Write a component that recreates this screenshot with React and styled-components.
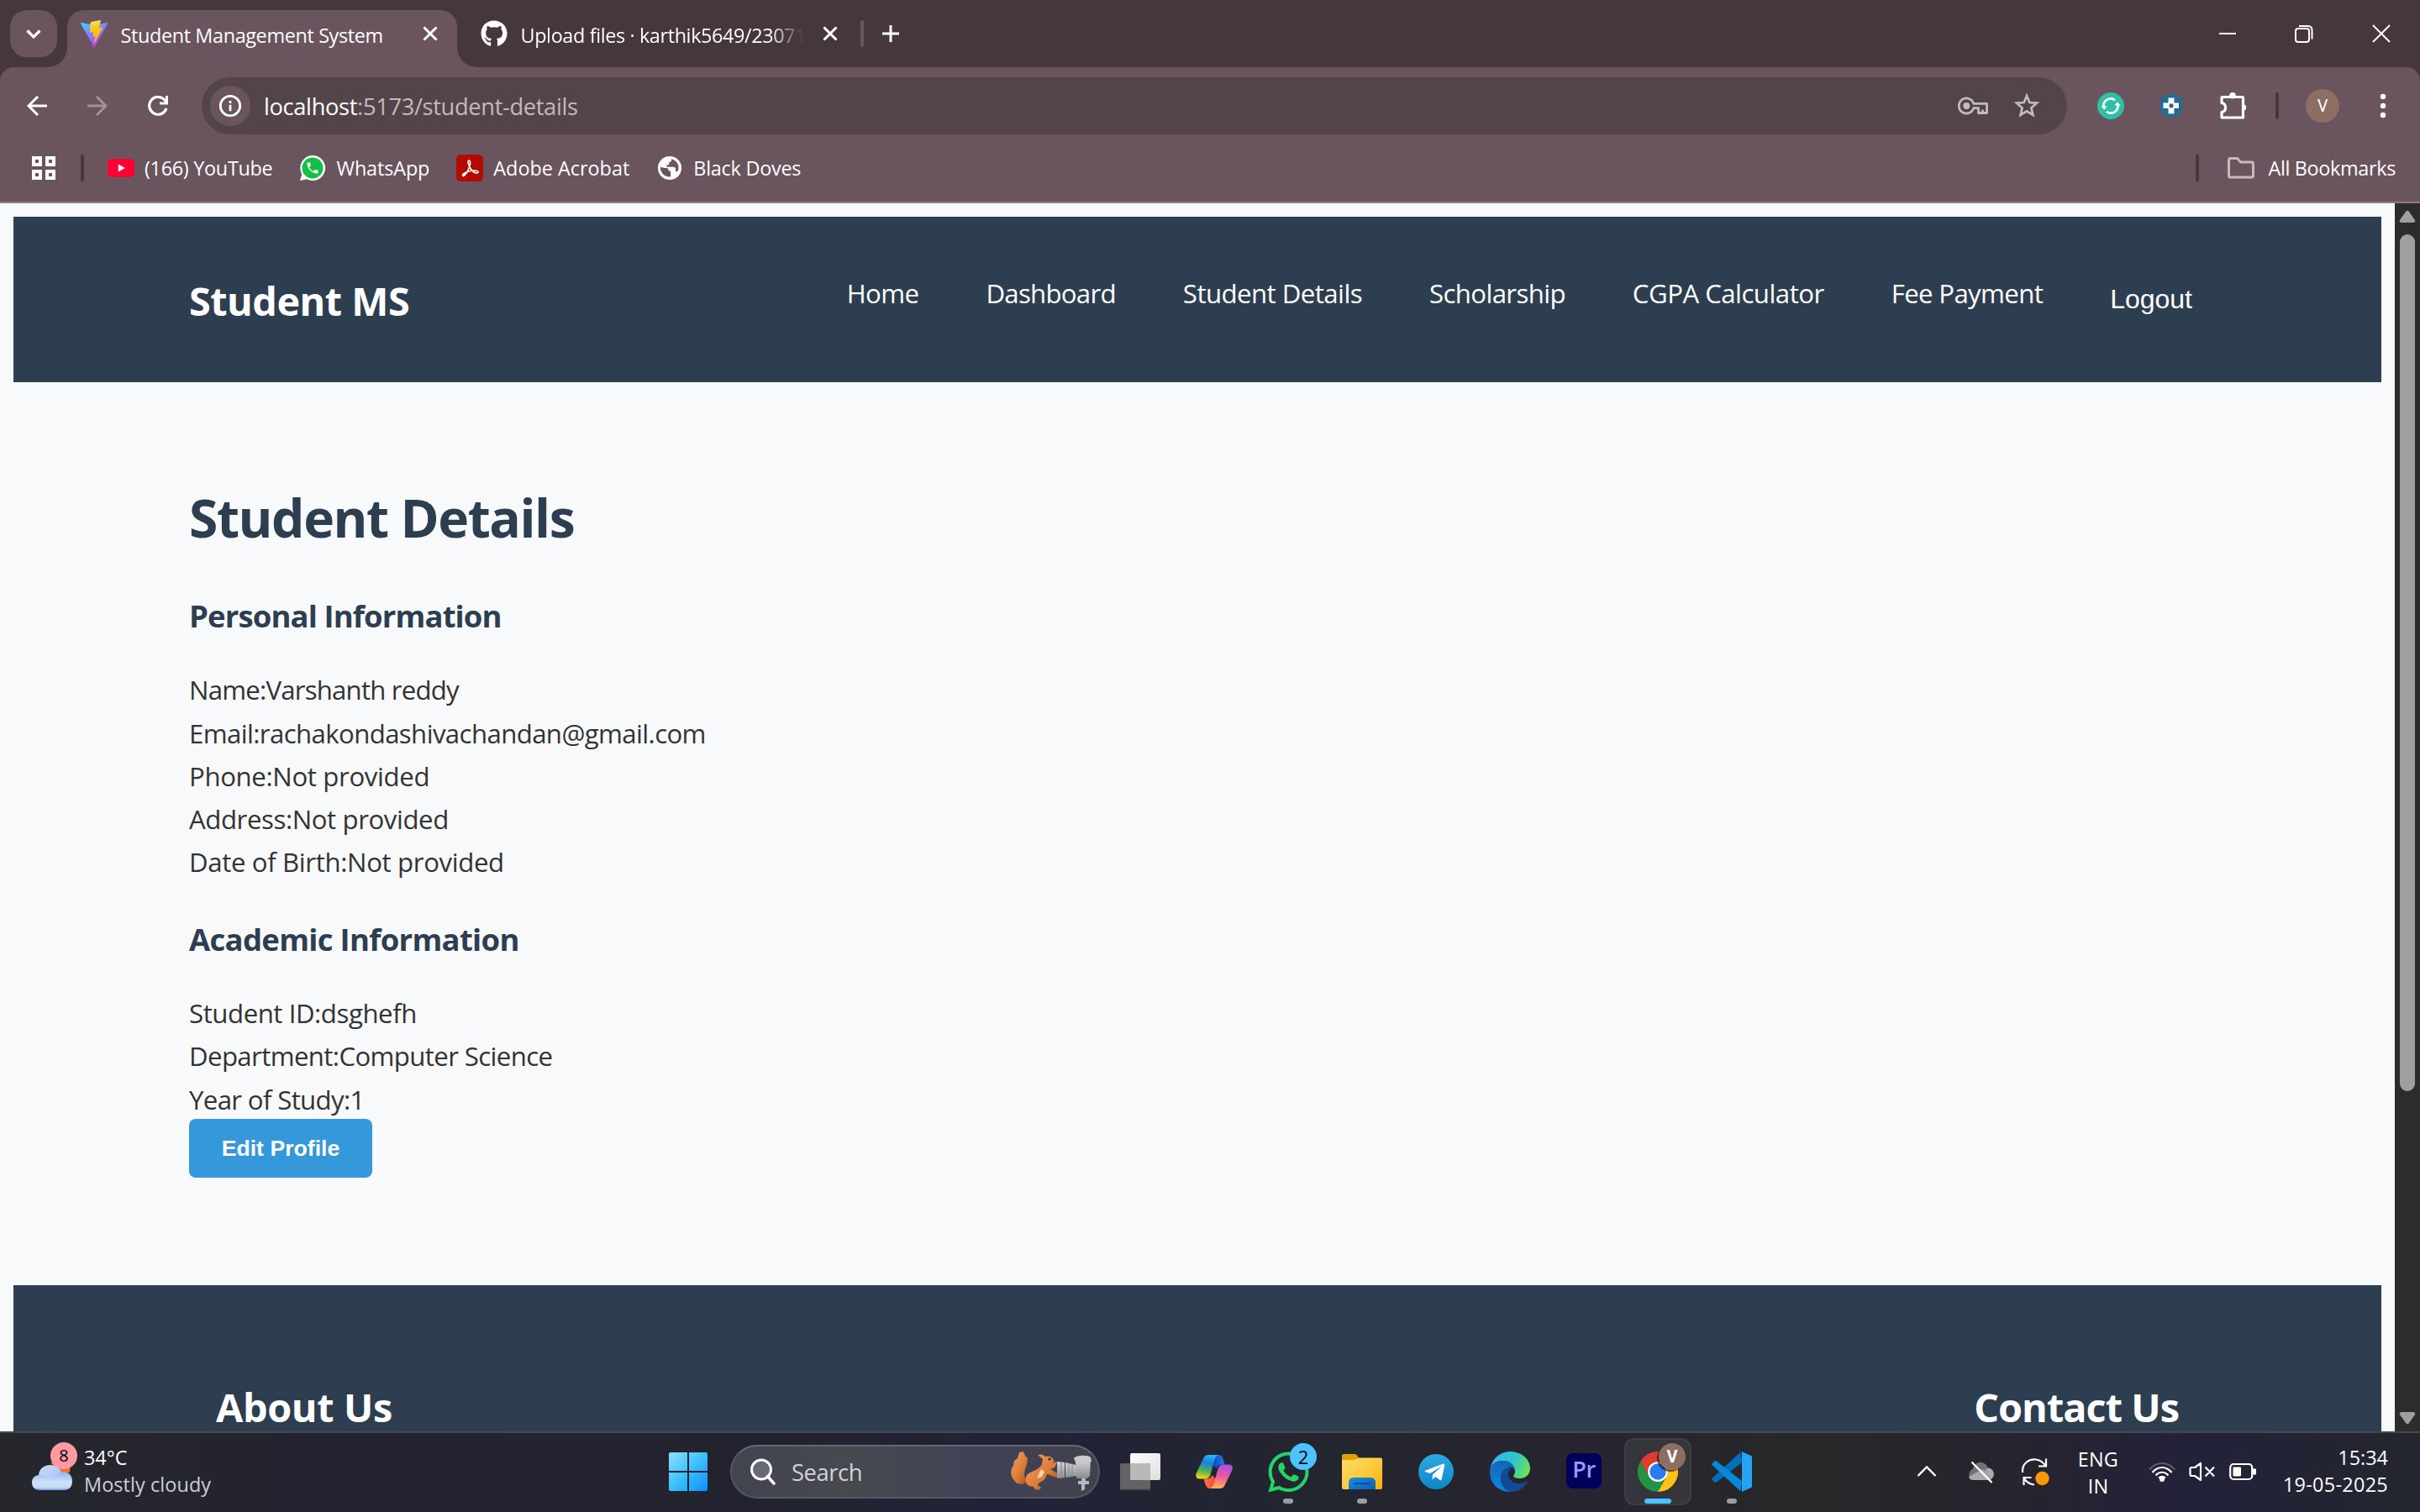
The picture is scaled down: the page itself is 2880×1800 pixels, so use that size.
import React from "react";
import styled, { createGlobalStyle, css } from "styled-components";
import { FaGithub, FaWhatsapp, FaTelegramPlane } from "react-icons/fa";

const ui = `"Open Sans", "Noto Sans", sans-serif`;
const color = {
  strip: "#46363d",
  toolbar: "#6a545d",
  field: "#53444a",
  navy: "#2d3e50",
  page: "#f8f9fb",
  accent: "#3498db",
};

const GlobalStyle = createGlobalStyle`
  * { box-sizing: border-box; }
  html, body { margin: 0; padding: 0; overflow: hidden; }
  body { font-family: ${ui}; }
  svg { display: block; flex: none; }
  h1, h2, h3, p { margin: 0; }
`;

const Screen = styled.div`
  display: flex;
  flex-direction: column;
  width: 2880px;
  height: 1800px;
  overflow: hidden;
`;

const Label = styled.span`
  white-space: nowrap;
  letter-spacing: ${(p) => p.$ls || 0}px;
`;

/* ---------- browser chrome ---------- */

const TabStrip = styled.div`
  display: flex;
  align-items: flex-start;
  height: 80px;
  padding: 12px 0 0 12px;
  background: ${color.strip};
  color: #fff;
  font-size: 23.4px;
`;

const TabSearch = styled.div`
  display: grid;
  place-items: center;
  width: 56px;
  height: 56px;
  margin-right: 12px;
  border-radius: 20px;
  background: ${color.toolbar};
`;

const Tab = styled.div`
  position: relative;
  display: flex;
  align-items: center;
  width: ${(p) => p.$width}px;
  height: 68px;
  padding: 0 ${(p) => (p.$active ? "20px 12px 16px" : "24px 12px 28px")};
  border-radius: 20px 20px 0 0;
  ${(p) =>
    p.$active &&
    css`
      background: ${color.toolbar};
      &::before,
      &::after {
        content: "";
        position: absolute;
        bottom: 0;
        width: 23px;
        height: 23px;
      }
      &::before {
        right: 100%;
        background: radial-gradient(circle at 0 0, transparent 22.5px, ${color.toolbar} 23px);
      }
      &::after {
        left: 100%;
        background: radial-gradient(circle at 100% 0, transparent 22.5px, ${color.toolbar} 23px);
      }
    `}
`;

const TabTitle = styled(Label)`
  margin: 0 auto 0 15.5px;
  padding-top: 3px;
  ${(p) => p.$fade && "mask-image: linear-gradient(90deg, #000 296px, transparent 336px);"}
`;

const IconBox = styled.div`
  display: grid;
  place-items: center;
  flex: none;
  width: ${(p) => p.$w || 32}px;
  height: ${(p) => p.$h || p.$w || 32}px;
`;

const Divider = styled.div`
  flex: none;
  width: 4px;
  height: 32px;
  border-radius: 2px;
  margin: ${(p) => p.$margin || 0};
  background: ${(p) => (p.$light ? color.toolbar : color.strip)};
`;

const WindowButtons = styled.div`
  display: flex;
  margin: 0 0 0 auto;
  height: 56px;
`;

const ToolbarArea = styled.div`
  background: ${color.strip};
`;

const Toolbar = styled.div`
  display: flex;
  align-items: center;
  height: 92px;
  padding: 0 8px;
  border-radius: 16px 16px 0 0;
  background: ${color.toolbar};
`;

const Omnibox = styled.div`
  display: flex;
  align-items: center;
  flex: 1;
  height: 68px;
  margin: 0 16px;
  padding: 0 32px 0 10px;
  border-radius: 34px;
  background: ${color.field};
`;

const OmniboxActions = styled.div`
  display: flex;
  align-items: center;
  gap: 30px;
`;

const SiteInfo = styled.div`
  display: grid;
  place-items: center;
  width: 48px;
  height: 48px;
  border-radius: 50%;
  background: ${color.toolbar};
`;

const Url = styled(Label)`
  margin: 0 auto 0 16px;
  font-size: 27.3px;
  color: #c3babe;
  b {
    font-weight: 400;
    color: #fff;
  }
`;

const Avatar = styled.div`
  display: grid;
  place-items: center;
  width: ${(p) => p.$size}px;
  height: ${(p) => p.$size}px;
  border-radius: 50%;
  background: #8d6e63;
  color: #fff;
  font: ${(p) => p.$weight || 400} 20px Roboto, sans-serif;
`;

const Bookmarks = styled.div`
  display: flex;
  align-items: center;
  height: 70px;
  padding: 0 29px 12px 36px;
  border-bottom: 2px solid #8d7a82;
  background: ${color.toolbar};
  color: #fff;
  font-size: 23.4px;
`;

const BookmarkList = styled.div`
  display: flex;
  gap: 32px;
`;

const Bookmark = styled.div`
  display: flex;
  align-items: center;
  gap: ${(p) => p.$gap || 12}px;
  ${Label} { padding-bottom: 1px; }
`;

/* ---------- web page ---------- */

const Viewport = styled.div`
  display: flex;
  height: 1462px;
  background: ${color.page};
`;

const Page = styled.div`
  flex: 1;
  display: flex;
  flex-direction: column;
  padding: 16px 16px 0;
  overflow: hidden;
`;

const Header = styled.header`
  display: flex;
  flex: none;
  justify-content: space-between;
  align-items: flex-start;
  height: 197px;
  padding: 62px 225px 0 209px;
  background: ${color.navy};
  color: #fff;
`;

const Brand = styled.h2`
  font-size: 46.8px;
  line-height: 76.8px;
  letter-spacing: -0.5px;
`;

const Nav = styled.nav`
  display: flex;
  gap: 80px;
  padding-top: 4px;
  font-size: 31.2px;
  line-height: 51.2px;
`;

const LogoutButton = styled.button`
  margin-top: 7px;
  padding: 0;
  border: 0;
  background: none;
  color: #fff;
  font: 32px/51.2px "Liberation Sans", Arial, sans-serif;
`;

const Main = styled.main`
  flex: none;
  height: 1075px;
  padding: 109.5px 209px 0;
  color: #333;
`;

const Title = styled.h1`
  margin-bottom: 37px;
  color: ${color.navy};
  font-size: 62.4px;
  line-height: 102.4px;
  letter-spacing: -1.45px;
`;

const Section = styled.section`
  margin-bottom: ${(p) => (p.$last ? -2.5 : 36.5)}px;
`;

const SectionTitle = styled.h3`
  margin-bottom: 32.5px;
  color: ${color.navy};
  font-size: 36.5px;
  line-height: 59.9px;
  letter-spacing: ${(p) => p.$ls}px;
`;

const Field = styled.p`
  font-size: 31.2px;
  line-height: 51.2px;
`;

const EditButton = styled.button`
  display: block;
  width: 218px;
  height: 70px;
  padding: 0;
  border: 0;
  border-radius: 8px;
  background: ${color.accent};
  color: #fff;
  font: 700 26.67px "Liberation Sans", Arial, sans-serif;
`;

const Footer = styled.footer`
  display: flex;
  flex: none;
  justify-content: space-between;
  height: 400px;
  padding: 106.6px 241px 0;
  background: ${color.navy};
  color: #fff;
  h2 {
    font-size: 46.8px;
    line-height: 76.8px;
  }
`;

const Scrollbar = styled.div`
  display: flex;
  flex-direction: column;
  align-items: center;
  width: 30px;
  padding: 8px 0 8px;
  background: #2c2c2c;
`;

const Thumb = styled.div`
  width: 18px;
  height: 1020px;
  margin: 13px 0 auto;
  border-radius: 9px;
  background: #9f9f9f;
`;

/* ---------- taskbar ---------- */

const Taskbar = styled.div`
  display: flex;
  align-items: center;
  height: 96px;
  padding-right: 38px;
  border-top: 2px solid #47484d;
  background: linear-gradient(90deg, #25272d 0, #23242f 12%, #22232f 32%, #202238 42%, #23262f 54%, #272430 65%, #272829 74%, #28242e 82%, #22223a 91%, #23262e 100%);
  color: #fff;
  font-size: 23.4px;
`;

const Weather = styled.div`
  display: flex;
  align-items: center;
  width: 775px;
  padding-left: 38px;
`;

const WeatherIcon = styled.div`
  position: relative;
  width: 48px;
  height: 64px;
  padding-top: 20px;
  margin-right: 14px;
`;

const Badge = styled.div`
  position: absolute;
  top: ${(p) => p.$top}px;
  left: ${(p) => p.$left}px;
  display: grid;
  place-items: center;
  width: 32px;
  height: 32px;
  border-radius: 50%;
  background: ${(p) => p.$bg};
  color: #000;
  font-size: ${(p) => p.$size || 20}px;
  line-height: 32px;
`;

const Stack = styled.div`
  display: flex;
  flex-direction: column;
  align-items: ${(p) => p.$align || "flex-start"};
  width: ${(p) => (p.$width ? p.$width + "px" : "auto")};
  margin: 0 ${(p) => p.$mr || 0}px ${(p) => p.$lift || 0}px ${(p) => p.$ml || 0}px;
  line-height: 32px;
`;

const Muted = styled(Label)`
  color: #cfcfd2;
`;

const AppButton = styled.div`
  position: relative;
  display: grid;
  place-items: center;
  flex: none;
  width: 80px;
  height: 80px;
  margin: 0 4px 2px;
  border-radius: 12px;
  ${(p) =>
    p.$active &&
    css`
      background: rgba(255, 255, 255, 0.07);
      box-shadow: inset 0 0 0 2px rgba(255, 255, 255, 0.05);
    `}
  &::after {
    content: "";
    position: absolute;
    bottom: 2px;
    left: calc(50% - ${(p) => (p.$active ? 16 : 6)}px);
    width: ${(p) => (p.$active ? 32 : 12)}px;
    height: 6px;
    border-radius: 3px;
    background: ${(p) => (p.$active ? "#4cc2ff" : p.$running ? "#9d9da1" : "transparent")};
  }
`;

const SearchBox = styled.div`
  display: flex;
  align-items: center;
  width: 440px;
  height: 64px;
  margin: 0 4px 2px 6px;
  padding: 0 8px 0 21px;
  border: 2px solid #555763;
  border-top-color: #676873;
  border-radius: 32px;
  background: linear-gradient(90deg, #41434f, #474950 30%, #3f4254 70%, #41424f);
  color: #d3d3d6;
  font-size: 27.3px;
  ${Label} { margin: 0 auto 0 18px; }
`;

const PremiereIcon = styled.div`
  width: 42px;
  height: 42px;
  margin-top: -3px;
  border-radius: 8px;
  background: #00005b;
  color: #9999ff;
  text-align: center;
  font: 600 27px/38px "Open Sans", sans-serif;
  letter-spacing: -0.5px;
`;

const Tray = styled.div`
  display: flex;
  align-items: center;
  gap: ${(p) => p.$gap}px;
  margin: 0 0 2px ${(p) => p.$ml || "0"};
`;

/* ---------- icons ---------- */

const Line = ({ size = 32, box = size, w = 2, c = "#fff", children }) => (
  <svg width={size} height={size} viewBox={`0 0 ${box} ${box}`} fill="none" stroke={c} strokeWidth={w}>
    {children}
  </svg>
);

const Cross = () => (
  <Line size={24} w={3}><path d="M4.5 4.5l15 15M19.5 4.5l-15 15" /></Line>
);

const ViteIcon = () => (
  <svg width="32" height="32" viewBox="0 0 32 32">
    <defs>
      <linearGradient id="va" x1="0" y1="0" x2=".6" y2="1"><stop stopColor="#41d1ff" /><stop offset="1" stopColor="#bd34fe" /></linearGradient>
      <linearGradient id="vb" x1=".4" y1="0" x2=".6" y2="1"><stop stopColor="#ffea5a" /><stop offset=".3" stopColor="#ffc520" /><stop offset="1" stopColor="#ffa800" /></linearGradient>
    </defs>
    <path d="M31.9 4.2L17 31.4c-.3.6-1.1.6-1.4 0L.1 4.2c-.3-.5.2-1.2.8-1.1l15.2 2.8L31 3.1c.7-.1 1.2.6.9 1.1z" fill="url(#va)" />
    <path d="M23.4.1L12 2.3c-.2 0-.3.2-.3.4L11 14.5c0 .3.2.5.5.4l3.2-.7c.3-.1.6.2.5.5l-.9 4.6c-.1.3.2.6.5.5l2-.6c.3-.1.6.2.5.5l-1.5 7.2c-.1.5.5.7.8.3L26.2 9.300c.2-.3-.1-.7-.4-.6l-3.300.6c-.3.1-.6-.2-.5-.5L24 .6c.1-.3-.2-.6-.6-.5z" fill="url(#vb)" />
  </svg>
);

const PHONE = "M6.62 10.79c1.44 2.83 3.76 5.14 6.59 6.59l2.2-2.2c.27-.27.67-.36 1.02-.24 1.12.37 2.33.57 3.57.57.55 0 1 .45 1 1V20c0 .55-.45 1-1 1-9.39 0-17-7.61-17-17 0-.55.45-1 1-1h3.5c.55 0 1 .45 1 1 0 1.25.2 2.45.57 3.57.11.35.03.74-.25 1.02l-2.2 2.2z";

const WhatsAppBookmark = () => (
  <svg width="32" height="32" viewBox="0 0 32 32">
    <path d="M16 1a15 15 0 1 1-7 28.200L1 31l2.200-7.600A15 15 0 0 1 16 1z" fill="#fff" />
    <circle cx="16" cy="16" r="12.500" fill="#12c143" />
    <path d={PHONE} fill="#fff" transform="translate(7.200 7.200) scale(.73)" />
  </svg>
);

const YouTubeIcon = () => (
  <svg width="32" height="32" viewBox="0 0 32 32">
    <rect y="5" width="32" height="22" rx="5" fill="#ff0033" />
    <path d="M12.800 11.500v9l8-4.500z" fill="#fff" />
  </svg>
);

const AcrobatIcon = () => (
  <svg width="32" height="32" viewBox="0 0 32 32">
    <rect width="32" height="32" rx="5.500" fill="#b30b00" />
    <path d="M15.300 7c-2 0-1.300 4.500 1 8.500 2.200 3.700 5.500 6.500 8 6.500 3 0 2.300-3.300-3-3-5 .2-9.500 1.500-12 3.500-3 2.400-1.500 4 .5 2.200 2-1.800 5-7.200 6.200-11.200.9-3.300.8-6.500-.7-6.500z" fill="none" stroke="#fff" strokeWidth="1.700" />
  </svg>
);

const GlobeIcon = () => (
  <svg width="32" height="32" viewBox="0 0 32 32">
    <circle cx="16" cy="16" r="14" fill="#fff" />
    <path d="M4.800 14.500c2.500 1.300 5.500 1.500 7.200 1.500 2 0 2.800 1.500 2.800 3.500H17v6.800c-6 .8-12.200-3.500-12.200-11.800zM18 5.200v1.600c0 1.500-1.200 2.500-2.800 2.500v2.900h-2.700v2.600h8.200c1.700 0 2.400 1.100 2.400 2.700v2.800h2c3.500-5.200.8-13-7.100-15.100z" fill={color.toolbar} />
  </svg>
);

const KeyIcon = () => (
  <svg width="36" height="32" viewBox="0 0 36 32" fill="none" stroke="#c3bcbc" strokeWidth="2.800">
    <path d="M18.800 13.300A9 9 0 1 0 18.800 18.700H24.500V24.500H34.500V13.300z" strokeLinejoin="round" />
    <path d="M29.500 20.500v4" />
    <circle cx="10.300" cy="16" r="4" fill="#c3bcbc" stroke="none" />
  </svg>
);

const StarIcon = () => (
  <Line size={32} w={2.700} c="#c3bcbc">
    <path d="M16 4l3.300 8 8.700.7-6.600 5.700 2 8.500-7.400-4.600-7.400 4.600 2-8.500L4 12.700l8.700-.7z" />
  </Line>
);

const GrammarlyIcon = () => (
  <svg width="32" height="32" viewBox="0 0 32 32">
    <circle cx="16" cy="16" r="16" fill="#2fbfa7" />
    <path d="M7.600 17.500a8.500 8.500 0 0 1 13.500-8.300M24.400 14.500a8.500 8.500 0 0 1-13.500 8.300" fill="none" stroke="#fff" strokeWidth="2.600" />
    <path d="M4.300 16.500h7.200l-3.200 4.300zM27.700 15.500h-7.200l3.200-4.300z" fill="#fff" />
  </svg>
);

const PlusExtIcon = () => (
  <svg width="28" height="28" viewBox="0 0 28 28">
    <circle cx="14" cy="14" r="14" fill="#256a94" />
    <path d="M11 5h7v6h5.500v6.500H18v6.500h-7v-6.500H5V11h6z" fill="#17415f" />
    <path d="M10.500 4.500h7v6H23V17h-5.500v6.500h-7V17h-6v-6.500h6z" fill="#fff" />
    <circle cx="14" cy="13.800" r="2.600" fill="#256a94" />
  </svg>
);

const PuzzleIcon = () => (
  <svg width="34" height="34" viewBox="-2 0 34 34">
    <path d="M3 7.500Q3 6.500 4 6.500H28Q28.500 6.500 28.500 7.500V31H4Q3 31 3 30V24.500a5.600 5.600 0 0 0 0-11z" fill="none" stroke="#fff" strokeWidth="3.200" strokeLinejoin="round" />
    <circle cx="16" cy="4.800" r="3.800" fill="#fff" />
    <path d="M28 15.200h.5a3.800 3.800 0 0 1 0 7.600H28z" fill="#fff" />
  </svg>
);

const WeatherCloud = () => (
  <svg width="48" height="34" viewBox="0 0 48 34">
    <defs>
      <linearGradient id="cl" x1="0" y1="0" x2="0" y2="1"><stop stopColor="#8fb1f2" /><stop offset=".55" stopColor="#cfe0f7" /><stop offset=".85" stopColor="#c5dbf7" /><stop offset="1" stopColor="#6f9ce8" /></linearGradient>
      <linearGradient id="cm" x1="0" y1="0" x2="1" y2="1"><stop stopColor="#c9d9f8" /><stop offset="1" stopColor="#a8c4f4" /></linearGradient>
    </defs>
    <path d="M22 0h24l-1 12H34z" fill="#f0781a" />
    <path d="M8 16C8 7 15 3 22 3s12 4 13 10v12H8z" fill="url(#cm)" />
    <path d="M10 33C4 33 0 30 0 24s4-9 9.500-9c3 0 5.500 1 7.500 3h10c2-4 6-7 10.500-7C44 11 48 16 48 22.500S44 33 38 33z" fill="url(#cl)" />
  </svg>
);

const StartIcon = () => (
  <svg width="46" height="46" viewBox="0 0 46 46">
    <defs><linearGradient id="st" x1="0" y1="0" x2="1" y2="1"><stop stopColor="#8ae2ff" /><stop offset=".5" stopColor="#3cc0fc" /><stop offset="1" stopColor="#0c90fb" /></linearGradient></defs>
    <path d="M2 0h20v22H0V2q0-2 2-2zM24 0h20q2 0 2 2v20H24zM0 24h22v22H2q-2 0-2-2zM24 24h22v20q0 2-2 2H24z" fill="url(#st)" />
  </svg>
);

const SearchIcon = () => (
  <Line size={32} w={3}><circle cx="14" cy="13.500" r="11.500" fill="#666a73" /><path d="M21.500 21.500L29 30" strokeLinecap="round" strokeWidth="3.500" /></Line>
);

const SquirrelCamera = () => (
  <svg width="96" height="48" viewBox="0 0 96 48">
    <defs>
      <linearGradient id="fur" x1="0" y1="0" x2="1" y2="1"><stop stopColor="#f7a25e" /><stop offset=".6" stopColor="#d97a38" /><stop offset="1" stopColor="#a84e1c" /></linearGradient>
      <linearGradient id="mtl" x1="0" y1="0" x2="0" y2="1"><stop stopColor="#d9d2dc" /><stop offset=".5" stopColor="#aeb0b4" /><stop offset="1" stopColor="#8a8d90" /></linearGradient>
    </defs>
    <path d="M10 1l5-1 2 5 3 3-1 8-2 5-1 6 1 5 3 4-6 3-7-1-5-6-2-6 1-6 2-3 1-6 4-3z" fill="url(#fur)" />
    <path d="M32 4l5-.5 4 2.500c5-1 9.500 1 10 5l-1 3.500 3-2.500 2 1-3 6-5 2 10 6-1 4-5-1-8-3.500c-1 6-5 9-10 11l-1 3 4 2-2 3-5-.5-2-3-5-1c-5-2-6-10-2-14 5-4 14-5 17-12l1-6z" fill="url(#fur)" />
    <path d="M36 21l4 3-3 6-6 2z" fill="#f7e3cf" opacity=".85" />
    <circle cx="46" cy="9" r="1.500" fill="#33231a" />
    <path d="M55 12l9 1v18l-9 1zM65 13l12 3v13l-12 2z" fill="url(#mtl)" />
    <path d="M60 12v20M69 14v17M73 15v15" stroke="#85878c" strokeWidth="1" />
    <path d="M77 9h18l-1 20-3 3H79l-2-3z" fill="url(#mtl)" />
    <path d="M75 8c3-4 17-4 20-1l1 5-19 1z" fill="#c9c9d1" />
    <path d="M84 32h5v3h4v4h-5v6l-4 2v-8h-4v-4h4z" fill="#b5b7bb" />
  </svg>
);

const TaskViewIcon = () => (
  <svg width="48" height="48" viewBox="0 0 48 48">
    <defs><linearGradient id="tv" x1="0" y1="0" x2="1" y2="1"><stop stopColor="#fff" /><stop offset="1" stopColor="#dedede" /></linearGradient></defs>
    <rect x="12" y="2" width="36" height="32" rx="2" fill="url(#tv)" />
    <rect y="14" width="36" height="32" rx="2" fill="#727272" opacity=".82" />
    <path d="M12 14h22q2 0 2 2v18H12z" fill="#b9b9b9" />
    <path d="M0 44.500h36q0 1.500-2 1.500H2q-2 0-2-1.500z" fill="#484848" />
  </svg>
);

const CopilotIcon = () => (
  <svg width="44" height="40" viewBox="0 0 44 40">
    <defs>
      <linearGradient id="c1" x1=".6" y1="0" x2=".4" y2="1"><stop stopColor="#2cb5f6" /><stop offset=".35" stopColor="#1483d8" /><stop offset=".7" stopColor="#55b45a" /><stop offset="1" stopColor="#fdd000" /></linearGradient>
      <linearGradient id="c2" x1=".6" y1="0" x2=".4" y2="1"><stop stopColor="#a350ea" /><stop offset=".5" stopColor="#f0599a" /><stop offset="1" stopColor="#ffb35a" /></linearGradient>
      <linearGradient id="c3"><stop stopColor="#0c3bbd" /><stop offset="1" stopColor="#1f7fe8" /></linearGradient>
      <linearGradient id="c4"><stop stopColor="#ff7a3c" /><stop offset="1" stopColor="#e8413e" /></linearGradient>
    </defs>
    <path d="M18 0h9q4 0 5.500 5l2 6.500H31q-5 0-6.500 4.500l-4-4z" fill="url(#c3)" />
    <path d="M26 40h-9q-4 0-5.500-5l-2-6.500H13q5 0 6.500-4.500l4 4z" fill="url(#c4)" />
    <path d="M9.300 4Q10.800 0 15.500 0H28q-3.800.5-5.300 5L17.500 23.500Q16 28.500 11 28.500H4.500Q-1 28.500.6 22z" fill="url(#c1)" />
    <path d="M34.700 36Q33.200 40 28.500 40H16q3.800-.5 5.300-5L26.500 16.500Q28 11.500 33 11.500H39.500Q45 11.500 43.400 18z" fill="url(#c2)" />
  </svg>
);

const ExplorerIcon = () => (
  <svg width="48" height="44" viewBox="0 0 48 44">
    <defs>
      <linearGradient id="ex" x1="0" y1="0" x2="1" y2="1"><stop stopColor="#ffdb68" /><stop offset=".5" stopColor="#ffcb3e" /><stop offset="1" stopColor="#fab005" /></linearGradient>
      <linearGradient id="eb" x1="0" y1="0" x2="1" y2="1"><stop stopColor="#1a90de" /><stop offset="1" stopColor="#0b61b4" /></linearGradient>
    </defs>
    <path d="M0 3q0-2 2-2h13q2 0 3 1.500L20 6v6H0z" fill="#e0a002" />
    <path d="M0 8h14q3 0 5-2.500h27q2 0 2 2V41q0 2-2 2H2q-2 0-2-2z" fill="url(#ex)" />
    <path d="M8 43v-8q0-6 6-6h20q6 0 6 6v8z" fill="url(#eb)" />
    <path d="M14 36h20" stroke="#0a4f96" strokeWidth="2" />
  </svg>
);

const Disc = styled.div`
  display: grid;
  place-items: center;
  width: 42px;
  height: 42px;
  padding-right: 3px;
  border-radius: 50%;
  background: linear-gradient(#2fa9e4, #0d86c4);
`;

const EdgeIcon = () => (
  <svg width="48" height="48" viewBox="0 0 48 48">
    <defs>
      <linearGradient id="e1" x1="0" y1=".3" x2="1" y2=".6"><stop stopColor="#35b9f1" /><stop offset=".55" stopColor="#2fc4cf" /><stop offset="1" stopColor="#6de34e" /></linearGradient>
      <linearGradient id="e2" x1=".5" y1="0" x2=".3" y2="1"><stop stopColor="#1565b5" /><stop offset="1" stopColor="#0a86e2" /></linearGradient>
    </defs>
    <path d="M.3 20C3 8 13 0 24 0c14 0 24 9.500 24 20 0 8-6 12-12 12-5 0-8-1.500-8-3 0-1 2-2 2-5.500C30 17 24 11 16 11 9 11 3 14 .3 20z" fill="url(#e1)" />
    <path d="M0 24c0-8 7-13 16-13 8 0 14 6 14 12-1-3-4-4.500-6-4.500-7 1.500-11 7.500-11 13.500 0 8 5 14 13 16C10 48.500 0 38 0 24z" fill="url(#e2)" />
    <path d="M24 18.500C17 20 13 26 13 32c0 8 6 16 14 16 8-.5 14-5 17.500-11.500 0-1-.5-1-1.500-.5-3 1.500-6 2-9 2-7 0-12-5-12-11 0-3.500 2-6 4-7z" fill="#114a93" />
  </svg>
);

const ChromeIcon = () => (
  <svg width="48" height="48" viewBox="0 0 48 48">
    <path d="M24 12h20.800A24 24 0 0 0 3.200 12l10.400 18A12 12 0 0 1 24 12z" fill="#e33b2e" />
    <path d="M13.600 30L3.200 12A24 24 0 0 0 24 48l10.400-18A12 12 0 0 1 13.600 30z" fill="#229342" />
    <path d="M34.400 30L24 48A24 24 0 0 0 44.800 12H24a12 12 0 0 1 10.400 18z" fill="#fbc116" />
    <circle cx="24" cy="24" r="12" fill="#fff" />
    <circle cx="24" cy="24" r="9.700" fill="#2a7af0" />
  </svg>
);

const ProfileBadge = styled.div`
  position: absolute;
  top: 6px;
  left: 41px;
  border-radius: 50%;
  box-shadow: -2px 2px 1px rgba(30, 20, 20, 0.7);
`;

const CodeIcon = () => (
  <svg width="48" height="48" viewBox="0 0 48 48">
    <path d="M34.500.5L36 13 5.500 36.700q-1 .6-2 0L.6 33.800q-1-1 0-2z" fill="#0070b8" />
    <path d="M5.500 11.300L36 35l-1.500 12.500L.6 16.200q-1-1 0-2l2.900-2.900q1-.6 2 0z" fill="#0488d8" />
    <path d="M34.500.500q.8-.7 1.800-.3L47 5q1 .5 1 1.600v34.800q0 1.100-1 1.600l-10.700 4.800q-1 .4-1.800-.3 1.500 1 1.500-1V1.500q0-1.500-1.500-1z" fill="#26a4f4" />
  </svg>
);

const CloudOff = () => (
  <svg width="32" height="32" viewBox="0 0 32 32">
    <path d="M7 26a7 7 0 0 1-.5-13C9 6 15 3 20 6c3 1 4.500 4 4.500 6a7 7 0 0 1 0 14z" fill="#727078" />
    <path d="M2 22L18 13 31 21a6 6 0 0 1-6 5H7q-4 0-5-4z" fill="#a9a8ad" />
    <path d="M24.500 11.500a7.300 7.300 0 0 1 6 11.500l-9-9z" fill="#a9a8ad" />
    <path d="M5.500 4.500L29.500 29" stroke="#fff" strokeWidth="2.200" />
  </svg>
);

const UpdateIcon = () => (
  <svg width="34" height="36" viewBox="1 0 34 36" fill="none" stroke="#fff" strokeWidth="2.200">
    <path d="M3 19C2 8 11 2.500 19 3.500c5 .5 8.500 3.500 11.500 7.500M31 2.500v9h-9M4.500 34v-9h9M5 26c3 5 7 7 12 7.500" />
    <circle cx="26.500" cy="26" r="8.200" fill="#ff9800" stroke="none" />
  </svg>
);

const WifiIcon = () => (
  <Line size={32} w={2.200}>
    <path d="M1 13.500C9 3.500 23 3.500 31 13.500" stroke="#5f5d69" />
    <path d="M4.500 17C11 9 21 9 27.500 17M8.500 20.500c4.200-5 10.800-5 15 0M12.200 23.800c2-2.500 5.600-2.500 7.600 0" />
    <circle cx="16" cy="25" r="3" fill="#fff" stroke="none" />
  </Line>
);

const MuteIcon = () => (
  <Line size={32} w={2.200}>
    <path d="M14 6v20l-7-5H3q-1.500 0-1.500-2v-6q0-2 1.500-2h4zM19.500 10.500l10.500 11M30 10.500l-10.500 11" strokeLinejoin="round" />
  </Line>
);

const BatteryIcon = () => (
  <Line size={32} w={2.200}>
    <rect x="1.200" y="7" width="26" height="18" rx="4" />
    <rect x="4.500" y="10.500" width="9.500" height="11" rx="1" fill="#fff" stroke="none" />
    <path d="M30 12.500v7" strokeWidth="4" />
  </Line>
);

const bookmarks = [
  { label: "(166) YouTube", ls: -0.29, icon: <YouTubeIcon /> },
  { label: "WhatsApp", ls: -0.12, icon: <WhatsAppBookmark /> },
  { label: "Adobe Acrobat", ls: 0, icon: <AcrobatIcon /> },
  { label: "Black Doves", ls: -0.24, icon: <GlobeIcon /> },
];

const navItems = [
  ["Home", -0.6],
  ["Dashboard", -0.72],
  ["Student Details", -0.55],
  ["Scholarship", -0.64],
  ["CGPA Calculator", -0.52],
  ["Fee Payment", -0.65],
];

const personal = [
  ["Name:Varshanth reddy", -0.8],
  ["Email:rachakondashivachandan@gmail.com", -0.61],
  ["Phone:Not provided", -0.36],
  ["Address:Not provided", -0.42],
  ["Date of Birth:Not provided", -0.37],
];

const academic = [
  ["Student ID:dsghefh", -0.45],
  ["Department:Computer Science", -0.62],
  ["Year of Study:1", -0.66],
];

const Fields = ({ rows }) =>
  rows.map(([text, ls]) => (
    <Field key={text}><Label $ls={ls}>{text}</Label></Field>
  ));

export default function App() {
  return (
    <Screen>
      <GlobalStyle />
      <TabStrip>
        <TabSearch><Line size={24} w={3.200}><path d="M4.500 8.500l7.500 7.500 7.500-7.500" /></Line></TabSearch>
        <Tab $active $width={464}>
          <ViteIcon />
          <TabTitle $ls={-0.36}>Student Management System</TabTitle>
          <Cross />
        </Tab>
        <Tab $width={480}>
          <FaGithub size={32} />
          <TabTitle $ls={-0.37} $fade>Upload files · karthik5649/23071</TabTitle>
          <Cross />
        </Tab>
        <Divider $light $margin="12px 20px 0 0" />
        <IconBox $w={24} $h={56}><Line size={24} w={3}><path d="M12 2v20M2 12h20" /></Line></IconBox>
        <WindowButtons>
          <IconBox $w={91} $h={56}><Line size={24} w={2}><path d="M2 12h20" /></Line></IconBox>
          <IconBox $w={92} $h={56}>
            <Line size={24} w={2}>
              <rect x="2" y="6" width="16" height="16" rx="3" />
              <path d="M6 3h10.500q5 0 5 5v10.500" />
            </Line>
          </IconBox>
          <IconBox $w={92} $h={56}><Line size={24} w={2}><path d="M2 2l20 20M22 2L2 22" /></Line></IconBox>
        </WindowButtons>
      </TabStrip>

      <ToolbarArea>
        <Toolbar>
          <IconBox $w={72}><Line size={24} w={3}><path d="M24 12H2M13 1L2 12l11 11" /></Line></IconBox>
          <IconBox $w={72}><Line size={24} w={3} c="#9f9197"><path d="M0 12h22M11 1l11 11-11 11" /></Line></IconBox>
          <IconBox $w={72}>
            <Line size={24} w={3.200}><path d="M22 15a10.400 10.400 0 1 1-2.500-10.500L22 7M22.500 0v9h-8.500" /></Line>
          </IconBox>
          <Omnibox>
            <SiteInfo>
              <Line size={28} w={2.800}>
                <circle cx="14" cy="14" r="11.700" />
                <path d="M14 12.800v7.400M14 8v3" />
              </Line>
            </SiteInfo>
            <Url $ls={-0.36}><b>localhost</b>:5173/student-details</Url>
            <OmniboxActions>
              <KeyIcon />
              <StarIcon />
            </OmniboxActions>
          </Omnibox>
          <IconBox $w={72}><GrammarlyIcon /></IconBox>
          <IconBox $w={72}><PlusExtIcon /></IconBox>
          <IconBox $w={72}><PuzzleIcon /></IconBox>
          <Divider $margin="0 16px" />
          <IconBox $w={72}><Avatar $size={40}>V</Avatar></IconBox>
          <IconBox $w={72}>
            <svg width="8" height="30" viewBox="0 0 8 30" fill="#fff"><circle cx="4" cy="4" r="3.200" /><circle cx="4" cy="15" r="3.200" /><circle cx="4" cy="26" r="3.200" /></svg>
          </IconBox>
        </Toolbar>
        <Bookmarks>
          <Line size={32} w={4}><path d="M4 4h8v8H4zM20 4h8v8h-8zM4 20h8v8H4zM20 20h8v8h-8z" /></Line>
          <Divider $margin="0 28px" />
          <BookmarkList>
            {bookmarks.map((b) => (
              <Bookmark key={b.label}>{b.icon}<Label $ls={b.ls}>{b.label}</Label></Bookmark>
            ))}
          </BookmarkList>
          <Divider $margin="0 32px 0 auto" />
          <Bookmark $gap={14}>
            <Line size={36} w={3} c="#c3bcbc"><path d="M3.500 8.500q0-2 2-2h8l4 4.500h13q2 0 2 2v14q0 2-2 2h-25q-2 0-2-2z" /></Line>
            <Label $ls={-0.33}>All Bookmarks</Label>
          </Bookmark>
        </Bookmarks>
      </ToolbarArea>

      <Viewport>
        <Page>
          <Header>
            <Brand>Student MS</Brand>
            <Nav>
              {navItems.map(([text, ls]) => <Label key={text} $ls={ls}>{text}</Label>)}
              <LogoutButton>Logout</LogoutButton>
            </Nav>
          </Header>
          <Main>
            <Title>Student Details</Title>
            <Section>
              <SectionTitle $ls={-0.88}>Personal Information</SectionTitle>
              <Fields rows={personal} />
            </Section>
            <Section $last>
              <SectionTitle $ls={-0.7}>Academic Information</SectionTitle>
              <Fields rows={academic} />
            </Section>
            <EditButton>Edit Profile</EditButton>
          </Main>
          <Footer>
            <h2><Label $ls={-0.35}>About Us</Label></h2>
            <h2><Label $ls={-0.95}>Contact Us</Label></h2>
          </Footer>
        </Page>
        <Scrollbar>
          <svg width="20" height="16" viewBox="0 0 20 16"><path d="M8 2q2-2.500 4 0l7 10q1 3-2 3H3q-3 0-2-3z" fill="#9f9f9f" /></svg>
          <Thumb />
          <svg width="20" height="16" viewBox="0 0 20 16"><path d="M8 14q2 2.500 4 0l7-10q1-3-2-3H3Q0 1 1 4z" fill="#9f9f9f" /></svg>
        </Scrollbar>
      </Viewport>

      <Taskbar>
        <Weather>
          <WeatherIcon>
            <WeatherCloud />
            <Badge $top={-4} $left={22} $bg="#ff99a4">8</Badge>
          </WeatherIcon>
          <Stack $lift={5}>
            <Label>34°C</Label>
            <Muted $ls={0.1}>Mostly cloudy</Muted>
          </Stack>
        </Weather>
        <AppButton><StartIcon /></AppButton>
        <SearchBox>
          <SearchIcon />
          <Label $ls={-0.4}>Search</Label>
          <SquirrelCamera />
        </SearchBox>
        <AppButton><TaskViewIcon /></AppButton>
        <AppButton><CopilotIcon /></AppButton>
        <AppButton $running>
          <FaWhatsapp size={54.9} color="#25d366" />
          <Badge $top={6} $left={42} $bg="#4cc2ff" $size={22}>2</Badge>
        </AppButton>
        <AppButton $running><ExplorerIcon /></AppButton>
        <AppButton><Disc><FaTelegramPlane size={27} /></Disc></AppButton>
        <AppButton><EdgeIcon /></AppButton>
        <AppButton><PremiereIcon>Pr</PremiereIcon></AppButton>
        <AppButton $active>
          <ChromeIcon />
          <ProfileBadge><Avatar $size={32} $weight={700}>V</Avatar></ProfileBadge>
        </AppButton>
        <AppButton $running><CodeIcon /></AppButton>

        <Tray $gap={32} $ml="auto">
          <Line size={32} w={2.400}><path d="M5.500 21L16 10.500 26.500 21" /></Line>
          <CloudOff />
          <UpdateIcon />
        </Tray>
        <Stack $align="center" $width={50} $ml={33} $mr={35}>
          <Label $ls={0.2}>ENG</Label>
          <Label>IN</Label>
        </Stack>
        <Tray $gap={16}>
          <WifiIcon />
          <MuteIcon />
          <BatteryIcon />
        </Tray>
        <Stack $align="flex-end" $ml={32} $lift={5}>
          <Label>15:34</Label>
          <Label $ls={0.3}>19-05-2025</Label>
        </Stack>
      </Taskbar>
    </Screen>
  );
}
